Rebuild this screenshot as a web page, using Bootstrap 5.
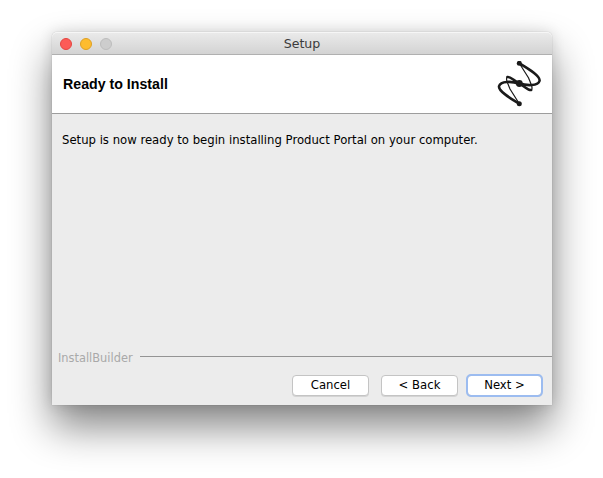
<!DOCTYPE html>
<html lang="en">
<head>
<meta charset="utf-8">
<title>Setup</title>
<link href="https://cdn.jsdelivr.net/npm/bootstrap@5.3.0/dist/css/bootstrap.min.css" rel="stylesheet">
<style>
html,body{background:#fff;height:478px;overflow:hidden;}
body{padding:32px 51px 0 52px;font-family:"DejaVu Sans","Liberation Sans",sans-serif;font-size:11.66px;color:#000;}
.inst-window{width:500px;height:373px;background:#ececec;border-radius:5px 5px 0 0;box-shadow:0 22px 40px rgba(0,0,0,.48),0 0 1px rgba(0,0,0,.35),0 0 14px rgba(0,0,0,.12);}
.inst-title{height:23px;background:linear-gradient(#ebebeb,#d3d3d3);border-bottom:1px solid #b0b0b0;border-radius:5px 5px 0 0;box-shadow:inset 0 1px 0 #f6f6f6;}
.inst-lights{left:8px;top:6px;}
.inst-light{width:12px;height:12px;border-radius:50%;}
.inst-red{background:#fc5b57;border:1px solid #e5453f;}
.inst-yellow{background:#fdbc2f;border:1px solid #dfa023;}
.inst-grey{background:#cdcdcd;border:1px solid #bdbdbd;}
.inst-name{font-size:12.6px;line-height:24px;color:#3c3c3c;}
.inst-head{height:59px;background:#fff;border-bottom:1px solid #9d9d9d;padding:0 10px 0 11px;}
.inst-head h1{font:700 14.2px/1 "Liberation Sans",sans-serif;margin:0;}
.inst-body{height:235px;padding:19px 10px 0;line-height:15px;}
.inst-brand{height:17px;}
.inst-brand span{color:#a9a9a9;padding:2px 0 0 6px;font-size:11.4px;}
.inst-brand i{height:1px;background:#949494;margin-left:7px;margin-top:-2px;}
.inst-actions{padding:9px 10px 0 0;gap:12px;}
.inst-btn{width:77px;height:21px;padding:0;background:#fff;border:1px solid #c4c4c4;border-radius:4px;font-size:11.66px;line-height:19px;color:#000;box-shadow:0 1px 0 #d4d4d4;}
.inst-next{width:75px;outline:2px solid #9cbcf0;outline-offset:-1px;margin-left:-3px;}
</style>
</head>
<body>
<div class="inst-window d-flex flex-column">
  <div class="inst-title position-relative text-center">
    <div class="inst-lights position-absolute d-flex gap-2">
      <div class="inst-light inst-red"></div>
      <div class="inst-light inst-yellow"></div>
      <div class="inst-light inst-grey"></div>
    </div>
    <div class="inst-name">Setup</div>
  </div>
  <div class="inst-head d-flex align-items-center justify-content-between">
    <h1>Ready to Install</h1>
    <svg width="46" height="46" viewBox="496 61 46 46" fill="none" stroke="#1a1a1a" stroke-linecap="round" aria-hidden="true">
      <path d="M519.3 63.3C527 68 541 76 539.500 81C538 86 527 86 519.300 83.300C514 81 510 76 507.500 77" stroke-width="2.6"/>
      <path d="M507.500 77C505 78 508 84 510 89L519.300 103.700" stroke-width="1.2"/>
      <path d="M519.300 103.700C511.600 99 497.600 91 499.100 86C500.600 81 511.600 81 519.300 83.700C524.600 86 528.600 91 531.100 90" stroke-width="2.6"/>
      <path d="M531.100 90C533.600 89 530.600 83 528.600 78L519.300 63.300" stroke-width="1.2"/>
      <circle cx="519.300" cy="63.300" r="2.500" fill="#1a1a1a" stroke="none"/>
      <circle cx="519.300" cy="83.500" r="3.400" fill="#1a1a1a" stroke="none"/>
      <circle cx="519.300" cy="103.700" r="2.500" fill="#1a1a1a" stroke="none"/>
    </svg>
  </div>
  <div class="inst-body">Setup is now ready to begin installing Product Portal on your computer.</div>
  <div class="inst-brand d-flex align-items-center"><span>InstallBuilder</span><i class="flex-grow-1"></i></div>
  <div class="inst-actions d-flex justify-content-end">
    <button type="button" class="btn inst-btn">Cancel</button>
    <button type="button" class="btn inst-btn">&lt; Back</button>
    <button type="button" class="btn inst-btn inst-next">Next &gt;</button>
  </div>
</div>
<script src="https://cdn.jsdelivr.net/npm/bootstrap@5.3.0/dist/js/bootstrap.bundle.min.js"></script>
</body>
</html>
